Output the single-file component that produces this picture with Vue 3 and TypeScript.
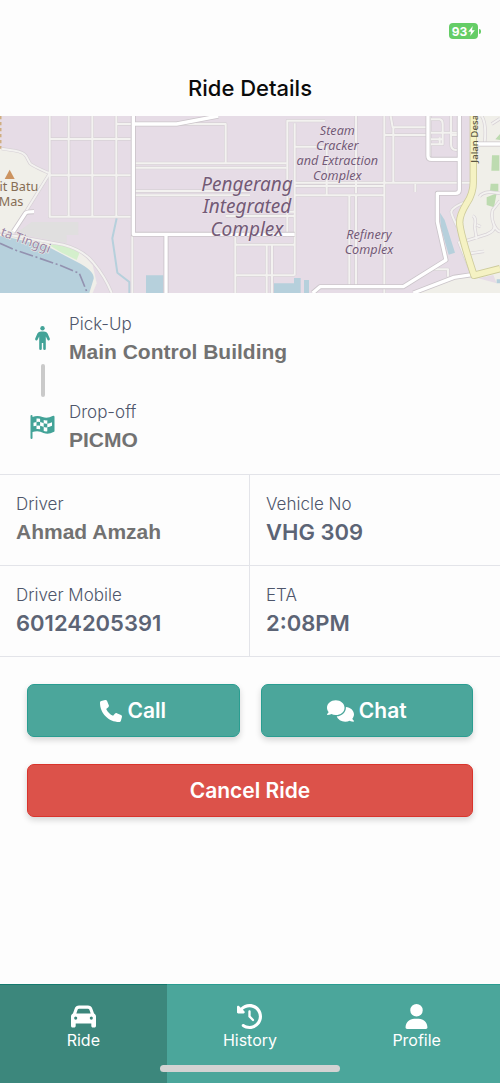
<script setup lang="ts">
interface TripFact {
  label: string
  value: string
  muted?: boolean
}

interface Tab {
  label: string
  viewBox: string
  path: string
  active?: boolean
}

const facts: TripFact[] = [
  { label: 'Driver', value: 'Ahmad Amzah', muted: true },
  { label: 'Vehicle No', value: 'VHG 309' },
  { label: 'Driver Mobile', value: '60124205391' },
  { label: 'ETA', value: '2:08PM' },
]

const tabs: Tab[] = [
  {
    label: 'Ride',
    viewBox: '0 0 512 512',
    active: true,
    path: 'M135.2 117.4L109.1 192H402.9l-26.1-74.6C372.3 104.6 360.2 96 346.6 96H165.4c-13.6 0-25.7 8.6-30.2 21.4zM39.6 196.8L74.8 96.3C88.3 57.8 124.6 32 165.4 32H346.6c40.8 0 77.1 25.8 90.6 64.3l35.2 100.5c23.2 9.6 39.6 32.5 39.6 59.2V400v48c0 17.7-14.3 32-32 32H448c-17.7 0-32-14.3-32-32V400H96v48c0 17.7-14.3 32-32 32H32c-17.7 0-32-14.3-32-32V400 256c0-26.7 16.4-49.6 39.6-59.2zM128 288a32 32 0 1 0 -64 0 32 32 0 1 0 64 0zm288 32a32 32 0 1 0 0-64 32 32 0 1 0 0 64z',
  },
  {
    label: 'History',
    viewBox: '0 0 512 512',
    path: 'M75 75L41 41C25.9 25.9 0 36.6 0 57.9V168c0 13.3 10.7 24 24 24H134.1c21.4 0 32.1-25.9 17-41l-30.8-30.8C155 85.5 203 64 256 64c106 0 192 86 192 192s-86 192-192 192c-40.8 0-78.6-12.7-109.7-34.4c-14.5-10.1-34.4-6.6-44.6 7.9s-6.6 34.4 7.9 44.6C151.2 495 201.7 512 256 512c141.4 0 256-114.6 256-256S397.4 0 256 0C185.3 0 121.3 28.7 75 75zm181 53c-13.3 0-24 10.7-24 24V256c0 6.4 2.5 12.5 7 17l72 72c9.4 9.4 24.6 9.4 33.9 0s9.4-24.6 0-33.9l-65-65V152c0-13.3-10.7-24-24-24z',
  },
  {
    label: 'Profile',
    viewBox: '-32 0 512 512',
    path: 'M224 256A128 128 0 1 0 224 0a128 128 0 1 0 0 256zm-45.7 48C79.8 304 0 383.8 0 482.3C0 498.7 13.3 512 29.7 512H418.3c16.4 0 29.7-13.3 29.7-29.7C448 383.8 368.2 304 269.7 304H178.3z',
  },
]

const minorRoads: string[] = [
  'M149 18V320H392M206 18V320M277 18V320M349 18V320M149 87H392M149 196H392M349 42H677V160',
  'M400 160H860M400 173H860M400 243H750M400 256H750M677 318H884M706 380V549M706 404H884M706 496H884M800 404V549M816 404V549M397 375V549',
  'M862 380V32H975M884 40V496M884 110H980V255M1068 18V250M884 218H1410M884 228H1150M884 256H1150M884 305H862M1153 18V549M1153 75H1280M1172 18L1178 52H1280M1180 52V218M1246 222V246M1048 256V530M1068 256V530',
  'M1290 18V150M1290 28H1320Q1328 30 1328 42V103H1290M1290 68H1380M1290 88H1328M1319 82V103M1353 18V103Q1353 120 1368 120H1380M1380 75H1350',
  'M5 116L45 122Q70 126 78 138L90 160Q98 168 149 190L40 365',
  'M1400 275Q1358 290 1354 305Q1352 310 1372 350M1376 395L1415 490M1376 395H1400M1298 478H1344V500',
  'M1500 250L1470 246Q1445 248 1438 260M1418 318Q1430 322 1424 350L1430 388M1430 345L1442 350M1400 392L1460 373Q1488 362 1482 345Q1472 320 1478 300L1500 272M1482 345Q1490 362 1500 365M1412 430L1452 424',
  'M1445 18Q1460 40 1454 98M1500 26L1475 42',
]

const majorRoads: string[] = [
  'M400 18V373H884',
  'M400 42H530L655 18',
  'M498 378V549',
  'M1284 18V138Q1284 148 1294 148H1377M1378 18V240Q1378 250 1366 250H1312V335L1338 450L1210 530H960L938 549',
  'M1240 549L1362 502L1416 494M1430 102H1500M40 365L76 310Q80 305 102 305',
]

const coastRoad = 'M0 374Q50 375 90 386L190 404Q250 420 280 458Q315 500 335 549'
</script>

<template>
  <div class="screen">
    <header class="top">
      <div class="status">
        <div class="battery">
          <span>93</span>
          <svg viewBox="0 0 8 12" aria-hidden="true"><path d="M5.5 0L0 7h3.4L2.5 12L8 5H4.6z" /></svg>
        </div>
      </div>
      <h1>Ride Details</h1>
    </header>

    <svg class="map" viewBox="0 18 1500 531" role="img" aria-label="Route map">
      <rect y="18" width="1500" height="531" fill="#e6dce6" />
      <path fill="#f0efe9" d="M0 116H40Q70 126 78 138L90 160Q98 168 149 190L40 372L0 365z" />
      <path fill="#f0efe9" d="M1418 18H1500V475L1425 490L1374 350V320L1418 255zM1240 549L1362 502L1420 496L1500 480V549z" />
      <path fill="#e6dce6" d="M1435 505L1480 495L1490 520z" />
      <path fill="#e0dfdf" d="M95 336H235V375H200V400L75 376L50 368z" />
      <path fill="#f0efe9" d="M0 374L90 388L190 408L245 428L278 465L290 520L278 549H0z" />
      <path fill="#b6d0dc" d="M0 376L90 397Q140 405 170 424L230 455Q284 482 281 506L268 549H0z" />
      <path fill="#d4efcc" d="M146 404Q215 402 238 430L230 450L185 428z" />
      <path fill="#b6d0dc" d="M438 496H490V549H438zM822 520H882V504H902V549H822zM912 510H927V549H912zM1320 308L1334 330L1365 428L1346 434L1322 350zM1490 508H1500V520H1490z" />
      <path fill="#bddbb0" d="M1476 136H1498V182H1474zM1472 221H1495V244H1470zM1460 262L1490 250L1482 292L1460 285zM1486 88L1500 72V90z" />
      <path class="creek" d="M350 325L337 385L352 488L388 516V549" />
      <path class="boundary" d="M0 400L45 420L105 440L180 466L238 490L262 549" />
      <path class="track" d="M0 18V116" />
      <path v-for="road in minorRoads" :key="'edge' + road" class="minor-edge" :d="road" />
      <path v-for="road in minorRoads" :key="road" class="minor" :d="road" />
      <path class="minor-edge" :d="coastRoad" />
      <path class="minor" :d="coastRoad" />
      <path v-for="road in majorRoads" :key="'edge' + road" class="major-edge" :d="road" />
      <path v-for="road in majorRoads" :key="road" class="major" :d="road" />
      <path class="avenue-edge" d="M1420 18V215Q1420 250 1400 280Q1378 315 1379 340Q1382 375 1422 496L1500 476" />
      <path class="avenue" d="M1420 18V215Q1420 250 1400 280Q1378 315 1379 340Q1382 375 1422 496L1500 476" />
      <path fill="#cc9360" d="M29 179L44 207H14z" />
      <g class="place">
        <text x="-22" y="244">kit Batu</text>
        <text x="-4" y="288">Mas</text>
      </g>
      <text class="coast" transform="translate(0 376) rotate(20)">ta Tinggi</text>
      <text class="street" transform="translate(1434 158) rotate(-90)">Jalan Desa</text>
      <g class="area area-large">
        <text x="741" y="243">Pengerang</text>
        <text x="741" y="310">Integrated</text>
        <text x="741" y="377">Complex</text>
      </g>
      <g class="area">
        <text x="1012" y="74">Steam</text>
        <text x="1012" y="119">Cracker</text>
        <text x="1012" y="164">and Extraction</text>
        <text x="1012" y="209">Complex</text>
        <text x="1107" y="387">Refinery</text>
        <text x="1107" y="432">Complex</text>
      </g>
    </svg>

    <section class="route" aria-label="Route">
      <div class="trail" aria-hidden="true">
        <svg class="trail-icon" viewBox="0 0 25 24">
          <circle cx="12.5" cy="2.3" r="2.2" />
          <path d="M11 5.5H14Q16.5 5.5 17.6 7.5L19.8 12.5Q20.2 14 19 14.4Q17.9 14.8 17.3 13.6L15.8 10.6V22.8Q15.8 24 14.5 24Q13.2 24 13.2 22.8V17H11.8V22.8Q11.8 24 10.5 24Q9.2 24 9.2 22.8V10.6L7.7 13.6Q7.1 14.8 6 14.4Q4.8 14 5.2 12.5L7.4 7.5Q8.5 5.5 11 5.5z" />
        </svg>
        <span class="trail-line"></span>
        <svg class="trail-icon" viewBox="0 0 24 24">
          <path d="M1 0Q2 0 2 1V2Q7 0 12 2Q17 4 22 1Q24 0 24 2V16Q24 17 23 17Q18 20 13 18Q8 15 2 17V23Q2 24 1 24Q0 24 0 23V1Q0 0 1 0z" />
          <path fill="#fff" d="M6 3.6Q7.8 3.3 9.6 3.7V7Q7.8 6.6 6 7zM13.2 5Q15 5.6 16.8 5.3V8.7Q15 9 13.2 8.3zM3 7.8L6 7V10.7L3 11.3zM9.6 7Q11.4 7.4 13.2 8.3V12Q11.4 11.2 9.6 10.7zM16.8 8.7Q19 8.4 21.5 7.2V10.8Q19 12 16.8 12.3zM6 10.7Q7.8 10.3 9.6 10.7V14.2Q7.8 13.8 6 14zM13.2 12Q15 12.6 16.8 12.3V16.3Q15 16.6 13.2 16z" />
        </svg>
      </div>
      <dl class="stops">
        <div class="stop">
          <dt>Pick-Up</dt>
          <dd class="muted">Main Control Building</dd>
        </div>
        <div class="stop">
          <dt>Drop-off</dt>
          <dd class="muted">PICMO</dd>
        </div>
      </dl>
    </section>

    <dl class="facts">
      <div v-for="fact in facts" :key="fact.label" class="fact">
        <dt>{{ fact.label }}</dt>
        <dd :class="{ muted: fact.muted }">{{ fact.value }}</dd>
      </div>
    </dl>

    <div class="actions">
      <button type="button" class="action">
        <svg class="phone" viewBox="0 0 512 512" aria-hidden="true">
          <path d="M164.9 24.6c-7.7-18.6-28-28.5-47.4-23.2l-88 24C12.1 30.2 0 46 0 64C0 311.4 200.6 512 448 512c18 0 33.8-12.1 38.6-29.5l24-88c5.3-19.4-4.6-39.7-23.2-47.4l-96-40c-16.3-6.8-35.2-2.1-46.3 11.6L304.7 368C234.3 334.7 177.3 277.7 144 207.3L193.3 167c13.7-11.2 18.4-30 11.6-46.3l-40-96z" />
        </svg>
        Call
      </button>
      <button type="button" class="action">
        <svg class="comments" viewBox="0 0 640 512" aria-hidden="true">
          <path d="M208 352c114.9 0 208-78.8 208-176S322.9 0 208 0S0 78.8 0 176c0 38.6 14.7 74.3 39.6 103.4c-3.5 9.4-8.7 17.7-14.2 24.7c-4.8 6.2-9.7 11-13.3 14.3c-1.8 1.6-3.3 2.9-4.3 3.7c-.5 .4-.9 .7-1.1 .8l-.2 .2C1 327.2-1.4 334.4 .8 340.9S9.1 352 16 352c21.8 0 43.8-5.6 62.1-12.5c9.2-3.5 17.8-7.4 25.2-11.4C134.1 343.3 169.8 352 208 352zM448 176c0 112.3-99.1 196.9-216.5 207C255.8 457.4 336.4 512 432 512c38.2 0 73.9-8.7 104.7-23.9c7.5 4 16 7.9 25.2 11.4c18.3 6.9 40.3 12.5 62.1 12.5c6.9 0 13.1-4.5 15.2-11.1c2.1-6.6-.2-13.8-5.8-17.9l-.2-.2c-.2-.2-.6-.4-1.1-.8c-1-.8-2.5-2-4.3-3.7c-3.6-3.3-8.5-8.1-13.3-14.3c-5.5-7-10.7-15.4-14.2-24.7c24.9-29 39.6-64.7 39.6-103.4c0-92.8-84.9-168.9-192.6-175.5c.4 5.1 .6 10.3 .6 15.5z" />
        </svg>
        Chat
      </button>
      <button type="button" class="action danger">Cancel Ride</button>
    </div>

    <nav class="tabs" aria-label="Main">
      <a v-for="tab in tabs" :key="tab.label" href="#" class="tab" :class="{ active: tab.active }">
        <svg :viewBox="tab.viewBox" aria-hidden="true"><path :d="tab.path" /></svg>
        <span>{{ tab.label }}</span>
      </a>
      <span class="home-bar" aria-hidden="true"></span>
    </nav>
  </div>
</template>

<style>
body {
  background: #fdfdfd;
}
</style>

<style scoped>
.screen {
  display: flex;
  flex-direction: column;
  min-height: 100vh;
  font-family: Inter, "Liberation Sans", sans-serif;
  background: #fdfdfd;
}

.status {
  display: flex;
  justify-content: flex-end;
  padding: 23px 22px 0 0;
}

.battery {
  position: relative;
  display: flex;
  align-items: center;
  justify-content: center;
  gap: 1px;
  width: 29px;
  height: 16px;
  border-radius: 4px;
  background: #65cd66;
  color: #fff;
  font-size: 12px;
  font-weight: 700;
}

.battery::after {
  content: "";
  position: absolute;
  left: 30px;
  top: 6px;
  width: 2px;
  height: 5px;
  border-radius: 0 2px 2px 0;
  background: #65cd66;
}

.battery svg {
  width: 7px;
  height: 10px;
  fill: #fff;
}

h1 {
  margin: 0;
  padding: 34px 0 13px;
  text-align: center;
  font-size: 22px;
  line-height: 30px;
  font-weight: 500;
  color: #0b0b0b;
}

.map {
  display: block;
  width: 100%;
  font-family: "Noto Sans", sans-serif;
}

.map path {
  stroke-linejoin: round;
}

.minor-edge,
.minor,
.major-edge,
.major,
.avenue-edge,
.avenue,
.creek,
.boundary,
.track {
  fill: none;
}

.minor-edge { stroke: #d7d1d6; stroke-width: 10; }
.minor { stroke: #f3f2f0; stroke-width: 6; }
.major-edge { stroke: #cbc5ca; stroke-width: 15; }
.major { stroke: #fff; stroke-width: 10; }
.avenue-edge { stroke: #cdcb9b; stroke-width: 22; }
.avenue { stroke: #f5f2c3; stroke-width: 17; }
.creek { stroke: #b6d0dc; stroke-width: 6; }
.boundary { stroke: #9392b0; stroke-width: 5; stroke-dasharray: 42 8 6 8; }
.track { stroke: #cfae81; stroke-width: 9; stroke-dasharray: 10 8; }

.place {
  font-size: 38px;
  fill: #866d55;
  stroke: #f0efe9;
  stroke-width: 3;
  paint-order: stroke;
}

.coast {
  font-size: 38px;
  fill: #9c85a4;
  stroke: #f0efe9;
  stroke-width: 3;
  paint-order: stroke;
}

.street {
  font-size: 29px;
  font-weight: 500;
  fill: #5b5744;
}

.area {
  font-size: 38px;
  font-style: italic;
  font-weight: 400;
  text-anchor: middle;
  fill: #735a76;
  stroke: #eee6ee;
  stroke-width: 3;
  paint-order: stroke;
}

.area-large {
  font-size: 57px;
}

dl,
dd {
  margin: 0;
}

dt {
  font-size: 17px;
  line-height: 24px;
  font-weight: 300;
  color: #4e566b;
}

dd {
  font-size: 22px;
  line-height: 32px;
  font-weight: 600;
  color: #5c6475;
}

.muted {
  font-family: "Liberation Sans", sans-serif;
  font-size: 21px;
  font-weight: 700;
  color: #727272;
}

.route {
  display: flex;
  gap: 14px;
  padding: 19px 16px 18px 30px;
}

.trail {
  display: flex;
  flex-direction: column;
  align-items: center;
  gap: 14px;
  padding-top: 14px;
}

.trail-icon {
  width: 25px;
  height: 24px;
  fill: #43a398;
}

.trail-line {
  width: 4px;
  height: 33px;
  margin: 0 0 4px;
  border-radius: 2px;
  background: #cacaca;
}

.stops {
  display: flex;
  flex-direction: column;
  gap: 32px;
}

.facts {
  display: grid;
  grid-template-columns: 1fr 1fr;
  border-top: 1px solid #e3e4e9;
}

.fact {
  padding: 17px 16px;
  border-bottom: 1px solid #e3e4e9;
}

.fact:nth-child(odd) {
  border-right: 1px solid #e3e4e9;
}

.actions {
  display: grid;
  grid-template-columns: 1fr 1fr;
  gap: 27px 21px;
  padding: 27px;
}

.action {
  display: flex;
  align-items: center;
  justify-content: center;
  gap: 5px;
  height: 53px;
  border: 1px solid #2a9d91;
  border-radius: 7px;
  background: #4ba69b;
  box-shadow: 0 3px 6px rgba(0, 0, 0, 0.16);
  font: 600 21px/28px Inter, "Liberation Sans", sans-serif;
  color: #fff;
}

.action svg {
  height: 22px;
  fill: #fff;
}

.phone {
  width: 22px;
}

.comments {
  width: 27px;
}

.danger {
  grid-column: 1 / -1;
  border-color: #d9342c;
  background: #dc524a;
}

.tabs {
  position: relative;
  display: grid;
  grid-template-columns: repeat(3, 1fr);
  margin-top: auto;
  background: #4ba69b;
}

.tab {
  display: flex;
  flex-direction: column;
  align-items: center;
  padding: 19px 0 32px;
  border-top: 1px solid #2a9d91;
  font-size: 16px;
  line-height: 22px;
  color: #fff;
  text-decoration: none;
}

.tab.active {
  border-color: #147a6e;
  background: #3c877c;
}

.tab svg {
  width: 25px;
  height: 25px;
  fill: #fff;
}

.home-bar {
  position: absolute;
  left: 50%;
  bottom: 11px;
  width: 36%;
  height: 7px;
  border-radius: 4px;
  background: #d3d3d3;
  transform: translateX(-50%);
}
</style>
